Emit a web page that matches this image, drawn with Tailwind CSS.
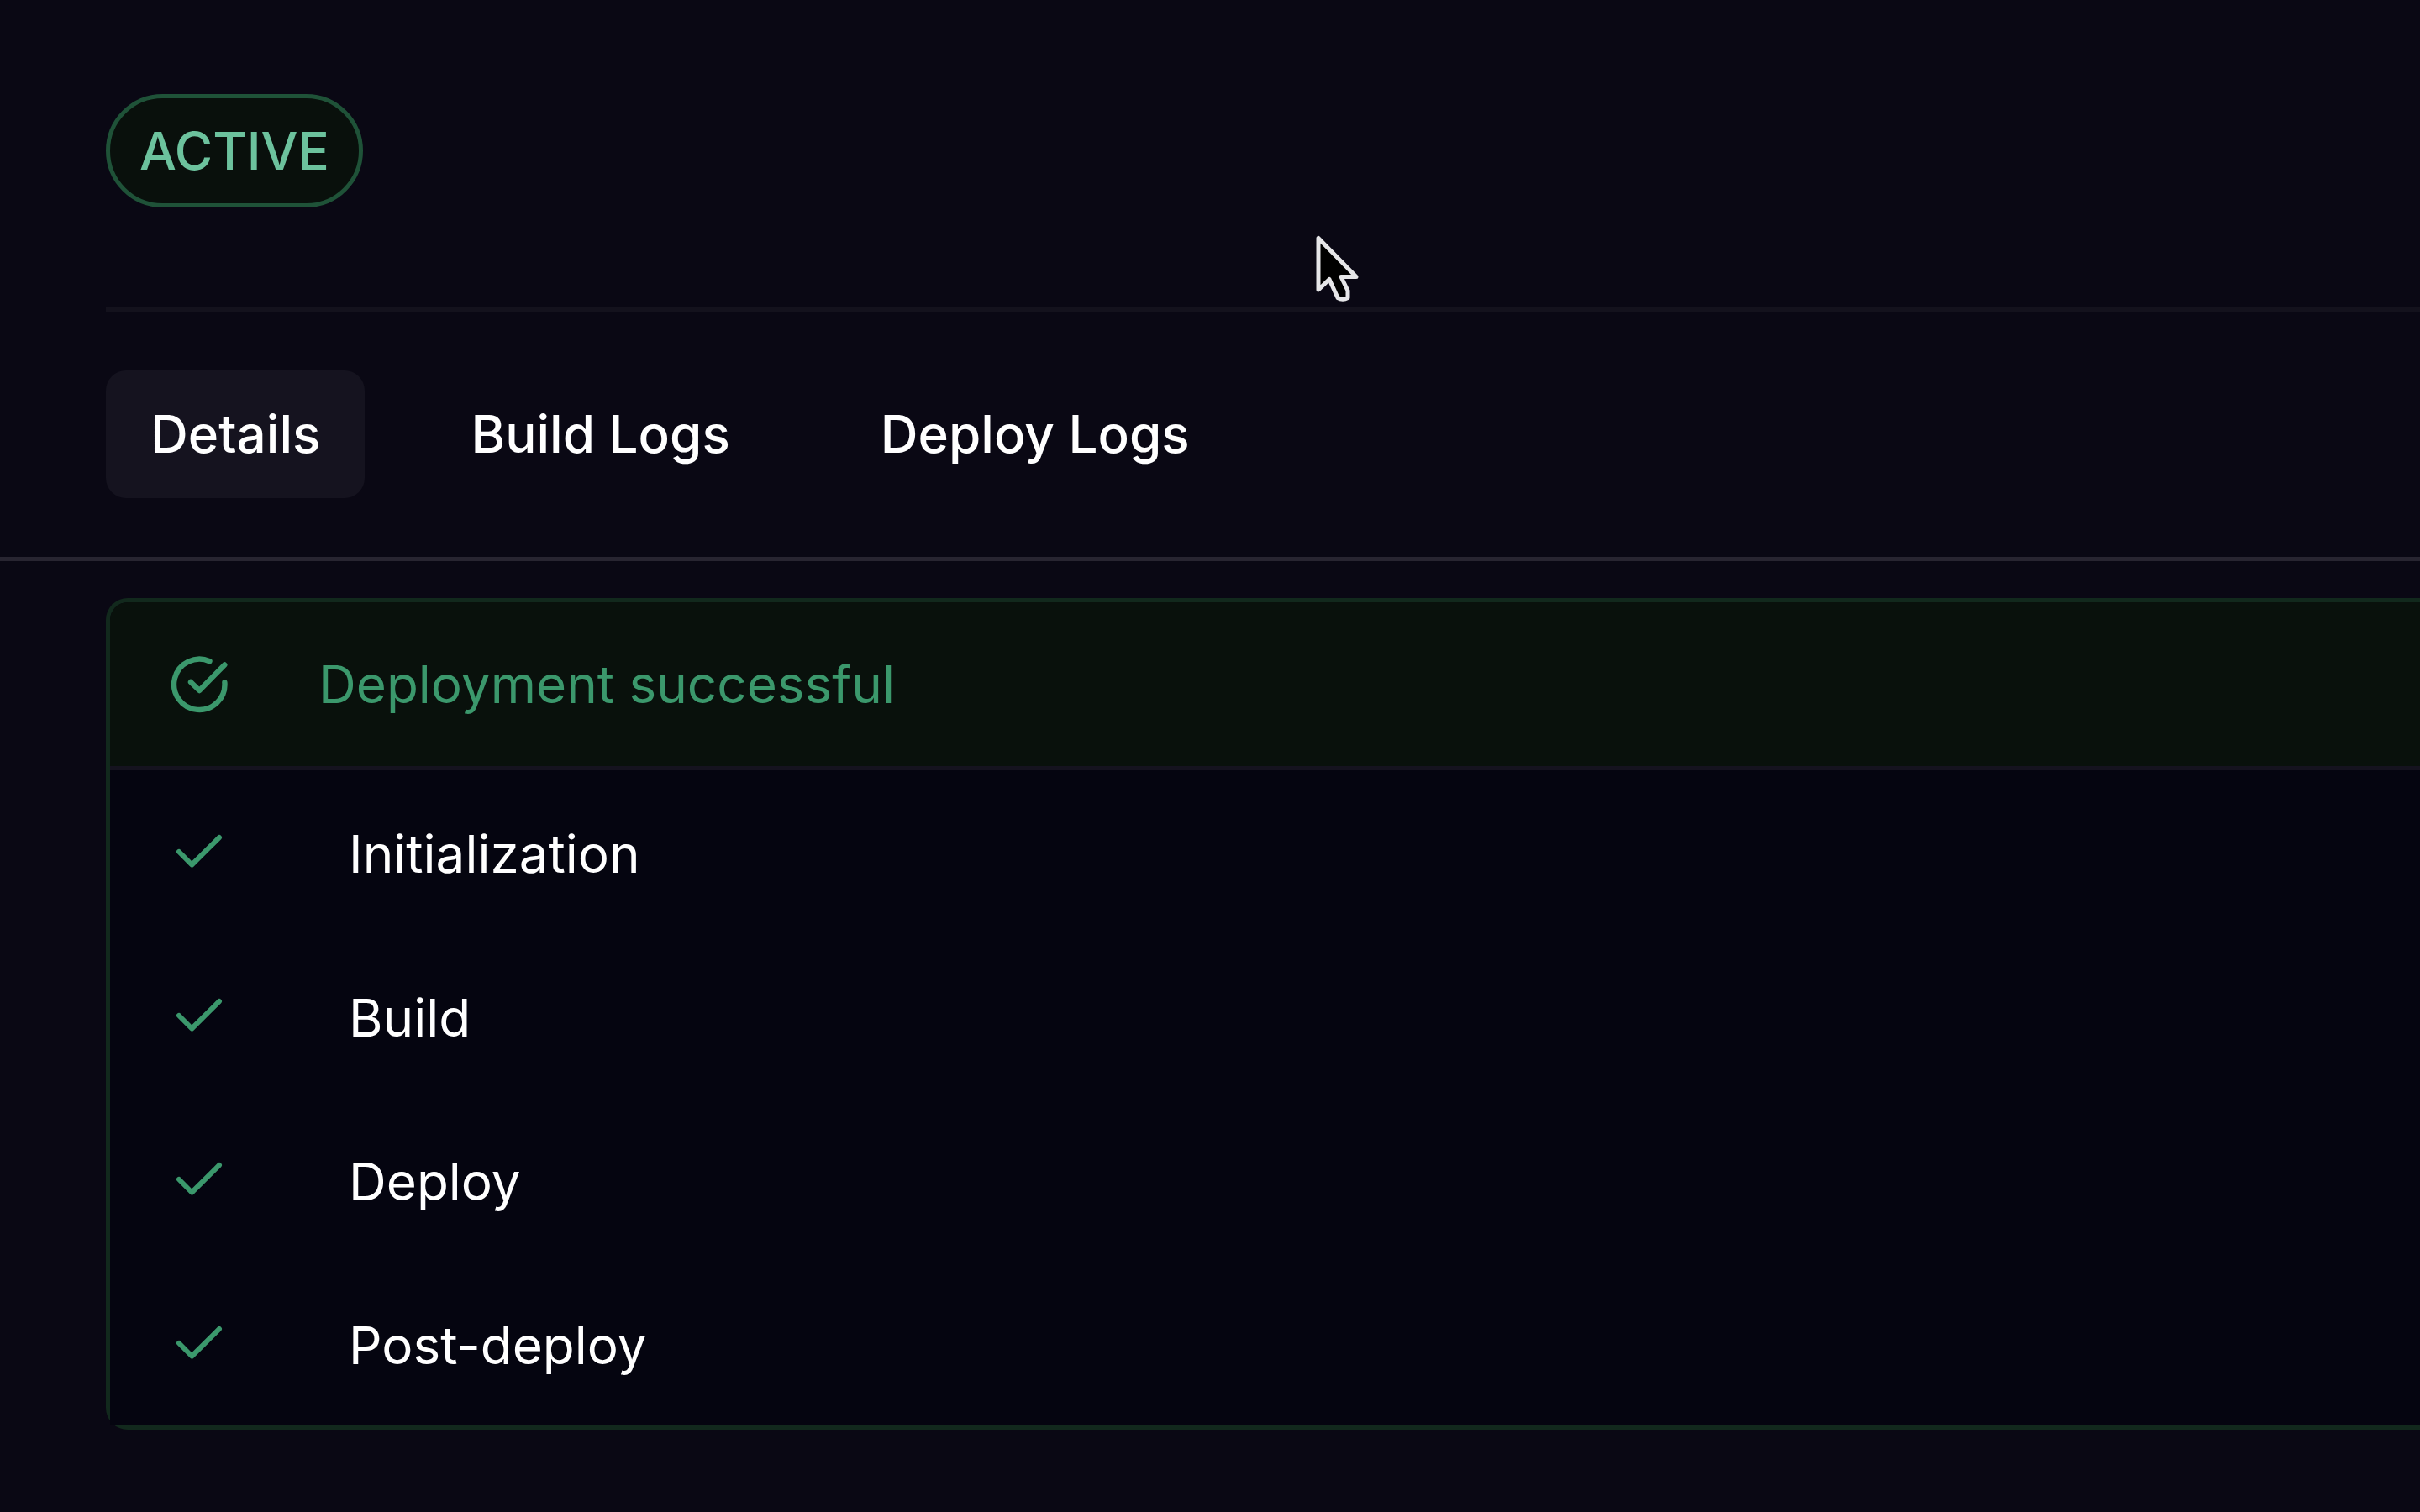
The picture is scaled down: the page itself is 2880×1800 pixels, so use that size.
<!DOCTYPE html>
<html lang="en">
<head>
    <meta charset="UTF-8">
    <meta name="viewport" content="width=device-width, initial-scale=1.0">
    <title>Deployment Details</title>
    <script src="https://cdn.jsdelivr.net/npm/@tailwindcss/browser@4"></script>
</head>
<body class="min-h-screen overflow-x-hidden bg-[#0a0814] font-['Inter',sans-serif] text-[62px] leading-[80px] text-white">
    <header class="border-b-[5px] border-[#282531] pl-[126px]">
        <div class="flex border-b-[5px] border-[#14121d] pt-28 pb-[119px]">
            <span class="flex h-[135px] items-center rounded-full border-[5px] border-[#1f5238] bg-[#09100c] px-[35px] font-medium text-[#6cc29d]">ACTIVE</span>
        </div>
        <nav class="flex gap-[73px] py-[70px] font-medium">
            <button class="h-[152px] rounded-3xl bg-[#15131f] px-[53px]">Details</button>
            <button class="h-[152px] rounded-3xl px-[53px]">Build Logs</button>
            <button class="h-[152px] rounded-3xl px-[53px]">Deploy Logs</button>
        </nav>
    </header>

    <main class="pt-11 pl-[126px]">
        <section class="rounded-l-[26px] border-[5px] border-r-0 border-[#12291d]">
            <div class="flex h-[200px] items-center gap-[104px] rounded-tl-[21px] border-b-[5px] border-[#15131f] bg-[#09110c] pl-[68px] text-[#3b986c]">
                <svg class="size-[76px]" viewBox="0 0 76 76" fill="none" stroke="currentColor" stroke-width="6.4" stroke-linecap="round" stroke-linejoin="round">
                    <path d="M50.5 10.2A30.2 30.2 0 1 0 68.4 35.5"/>
                    <path d="M28 35L38.3 45L68.3 14.5"/>
                </svg>
                <h2>Deployment successful</h2>
            </div>
            <ul class="bg-[#050510]">
                <li class="flex h-[195px] items-center gap-[140px] pt-1 pl-[68px]">
                    <svg class="size-[76px] text-[#3b986c]" viewBox="0 0 76 76" fill="none" stroke="currentColor" stroke-width="6" stroke-linecap="round" stroke-linejoin="round">
                        <path d="M14 35L29.3 50.5L62 18"/>
                    </svg>
                    <span>Initialization</span>
                </li>
                <li class="flex h-[195px] items-center gap-[140px] pt-1 pl-[68px]">
                    <svg class="size-[76px] text-[#3b986c]" viewBox="0 0 76 76" fill="none" stroke="currentColor" stroke-width="6" stroke-linecap="round" stroke-linejoin="round">
                        <path d="M14 35L29.3 50.5L62 18"/>
                    </svg>
                    <span>Build</span>
                </li>
                <li class="flex h-[195px] items-center gap-[140px] pt-1 pl-[68px]">
                    <svg class="size-[76px] text-[#3b986c]" viewBox="0 0 76 76" fill="none" stroke="currentColor" stroke-width="6" stroke-linecap="round" stroke-linejoin="round">
                        <path d="M14 35L29.3 50.5L62 18"/>
                    </svg>
                    <span>Deploy</span>
                </li>
                <li class="flex h-[195px] items-center gap-[140px] pt-1 pl-[68px]">
                    <svg class="size-[76px] text-[#3b986c]" viewBox="0 0 76 76" fill="none" stroke="currentColor" stroke-width="6" stroke-linecap="round" stroke-linejoin="round">
                        <path d="M14 35L29.3 50.5L62 18"/>
                    </svg>
                    <span>Post-deploy</span>
                </li>
            </ul>
        </section>
    </main>

    <!-- Mouse pointer -->
    <svg class="pointer-events-none absolute top-[276px] left-[1560px] h-[90px] w-[64px]" viewBox="0 0 64 90" fill="#000" stroke="#e6e6e8" stroke-width="5" stroke-linejoin="round">
        <path d="M9 7.5V69L22 56.5L32 78.5Q38 82 44 78.5V70L36 53.5H54Z"/>
    </svg>
</body>
</html>
